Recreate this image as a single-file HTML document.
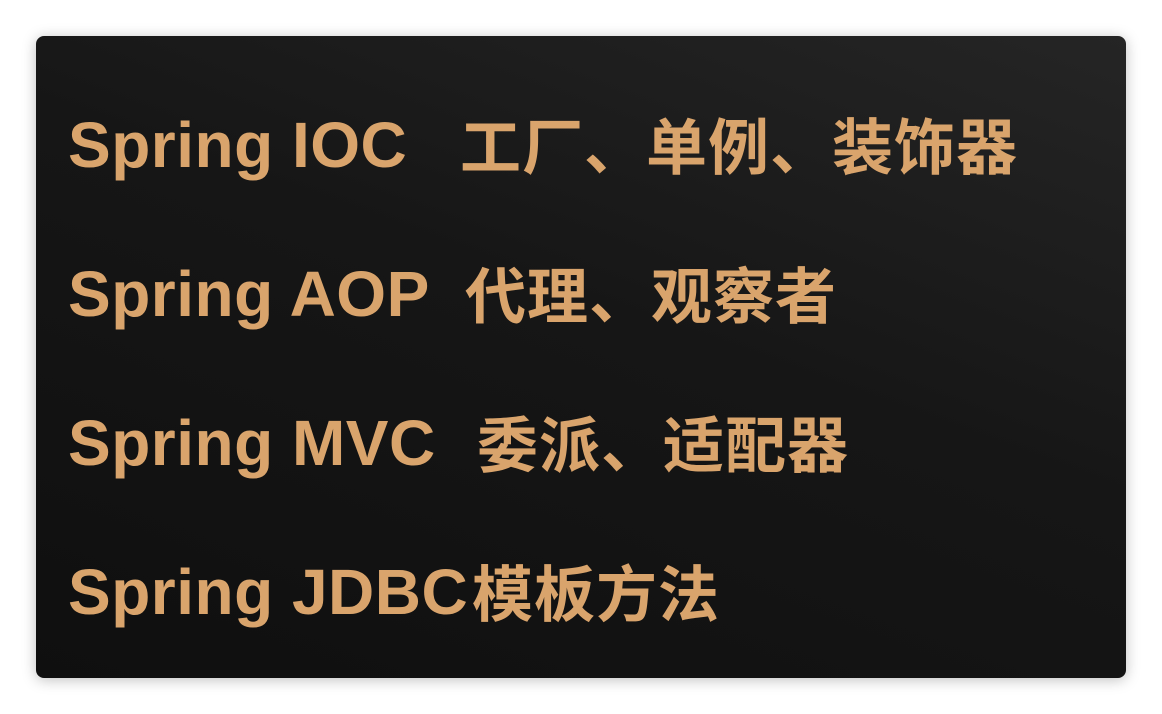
<!DOCTYPE html>
<html><head><meta charset="utf-8"><style>
html,body{margin:0;padding:0;background:#fff;width:1162px;height:714px;overflow:hidden}
.card{position:absolute;left:36px;top:36px;width:1090px;height:642px;border-radius:8px;
background:linear-gradient(200deg,#252525 0%,#161616 45%,#0f0f0f 100%);
box-shadow:0 2px 14px rgba(0,0,0,.25)}
.l{position:absolute;left:68px;color:#d9a46c;font-weight:bold;font-size:64px;line-height:62px;white-space:nowrap;
font-family:"Liberation Sans","Noto Sans CJK SC",sans-serif;letter-spacing:0.5px}
.c{position:absolute;font-family:"Noto Sans CJK SC","WenQuanYi Zen Hei",sans-serif;font-size:61px;font-weight:bold;color:#d9a46c;line-height:62px;white-space:nowrap;letter-spacing:1px}
</style></head><body>
<div class="card"></div>
<div class="l" style="top:114px">Spring IOC</div>
<div class="c" style="left:460px;top:112px">工厂、单例、装饰器</div>
<div class="l" style="top:263px">Spring AOP</div>
<div class="c" style="left:465px;top:261px">代理、观察者</div>
<div class="l" style="top:412px">Spring MVC</div>
<div class="c" style="left:477px;top:410px">委派、适配器</div>
<div class="l" style="top:561px">Spring JDBC</div>
<div class="c" style="left:472px;top:559px">模板方法</div>
</body></html>
